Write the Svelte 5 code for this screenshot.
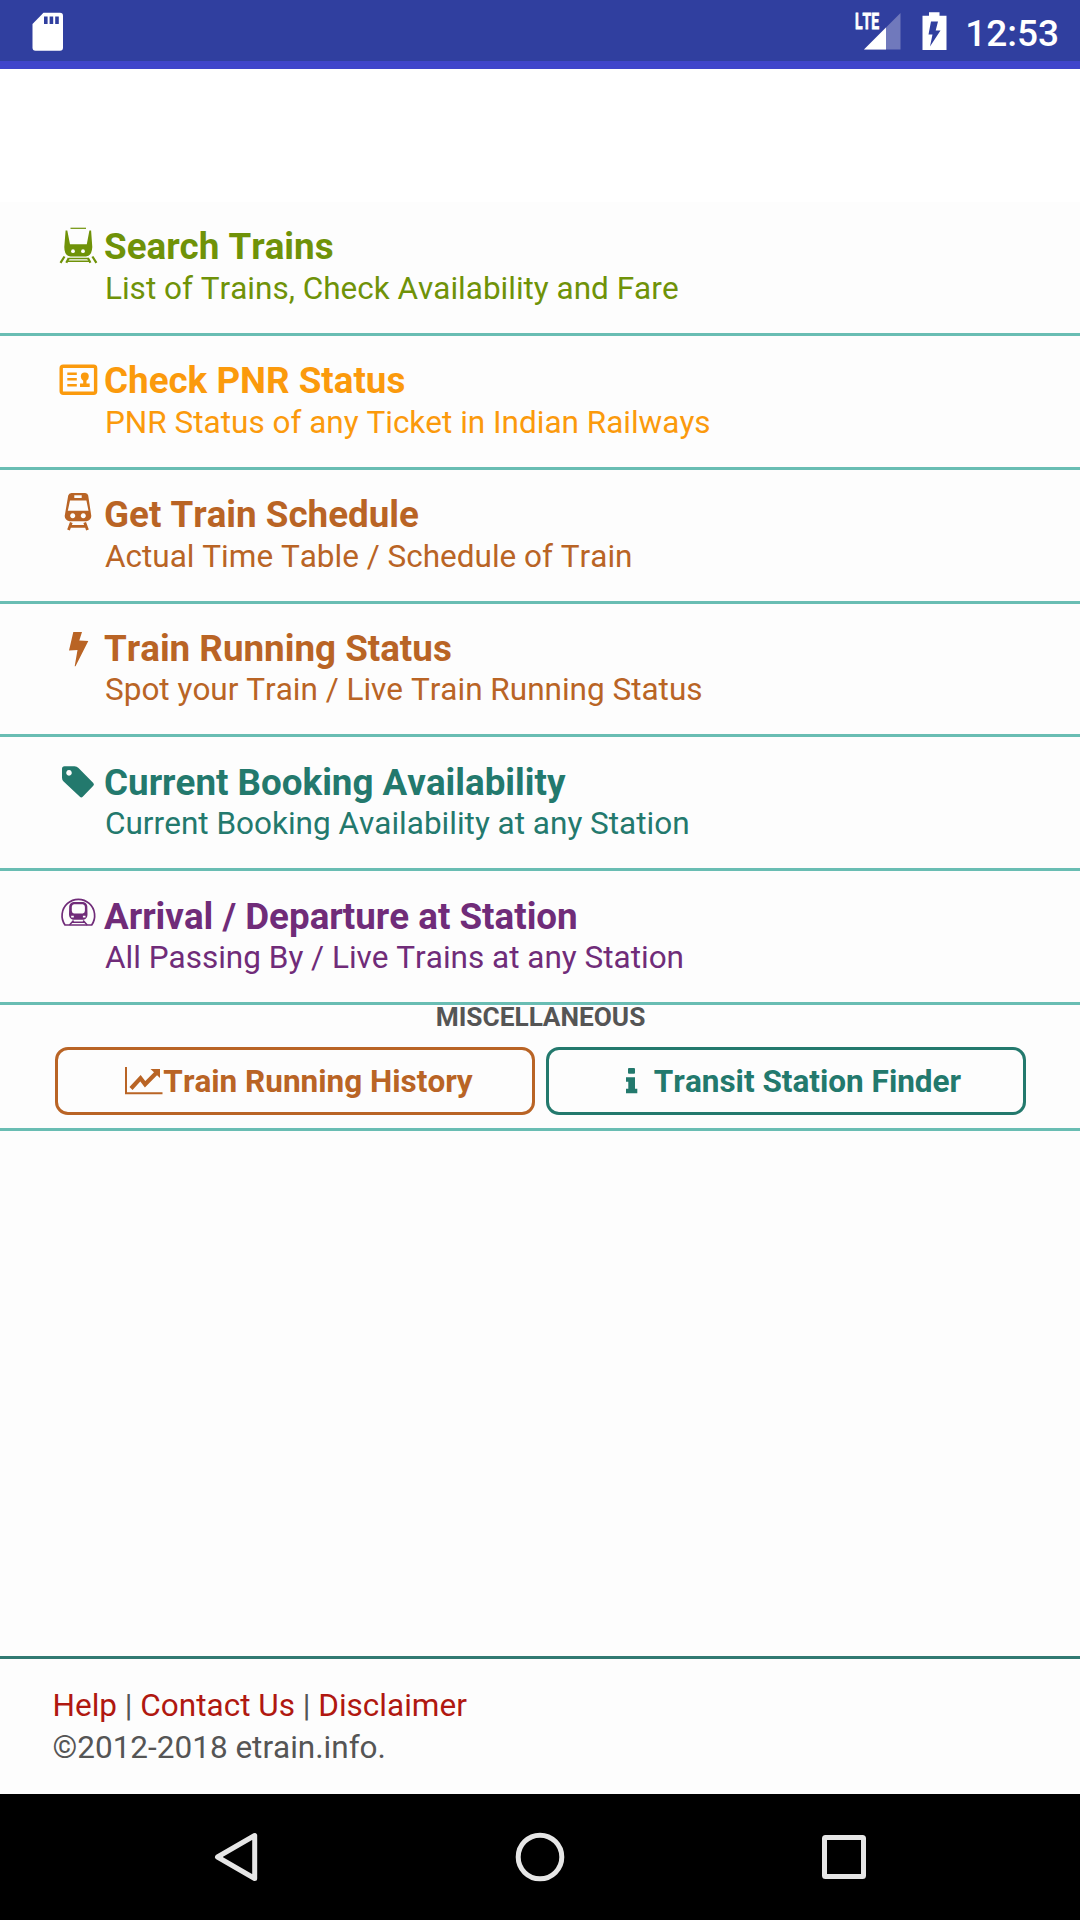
<script lang="ts">
	type Item = { title: string; text: string; color: string; icon: string };

	const items: Item[] = [
		{
			title: 'Search Trains',
			text: 'List of Trains, Check Availability and Fare',
			color: 'green',
			icon: 'train-front'
		},
		{
			title: 'Check PNR Status',
			text: 'PNR Status of any Ticket in Indian Railways',
			color: 'orange',
			icon: 'card'
		},
		{
			title: 'Get Train Schedule',
			text: 'Actual Time Table / Schedule of Train',
			color: 'brown',
			icon: 'train'
		},
		{
			title: 'Train Running Status',
			text: 'Spot your Train / Live Train Running Status',
			color: 'brown',
			icon: 'bolt'
		},
		{
			title: 'Current Booking Availability',
			text: 'Current Booking Availability at any Station',
			color: 'teal',
			icon: 'tag'
		},
		{
			title: 'Arrival / Departure at Station',
			text: 'All Passing By / Live Trains at any Station',
			color: 'purple',
			icon: 'tunnel'
		}
	];
</script>

<div class="screen">
	<header class="status-bar">
		<svg class="sd" width="32" height="40" viewBox="0 0 32 40">
			<path d="M11.500 0.700H28q3 0 3 3v32q0 3-3 3H3.500q-3 0-3-3V12z" fill="#fff" />
			<path d="M12 4.500h3.600v7.500H12zM17.600 4.500h3.600v7.500h-3.600zM23.200 4.500h3.600v7.500h-3.600z" fill="#303f9f" />
		</svg>
		<div class="status-right">
			<svg class="signal" width="50" height="50" viewBox="-4 -10 50 50">
				<path d="M45.500 1v36.500H9z" fill="#7079bc" />
				<path d="M31 15.500v22H9z" fill="#fff" />
				<text x="0" y="17.200" textLength="24" lengthAdjust="spacingAndGlyphs">LTE</text>
			</svg>
			<svg class="battery" width="25" height="40" viewBox="0 0 25 40">
				<path d="M7 0.300h10.500v3.500H24.500v34.200H0.500V3.800H7z" fill="#fff" />
				<path d="M9 9.500h7l-2.300 9H18.500L8 34.500l2.500-12H6.500z" fill="#303f9f" />
			</svg>
			<span class="clock">12:53</span>
		</div>
	</header>

	<main>
		<div class="banner"></div>

		{#each items as item}
			<div class="item {item.color}">
				<div class="title">
					<svg class="icon" width="40" height="40" viewBox="0 0 40 40" fill="currentColor">
						{#if item.icon === 'train-front'}
							<path d="M7.600 4.500 6.300 21q0 9 6.200 9.500h15.400q6-.5 6.400-9.500L33.100 4.500H31.400l-2.600 13.800H12L9.300 4.500z" />
							<path d="M12.500 2.300h15.500" fill="none" stroke="currentColor" stroke-width="1.200" />
							<path d="M6.500 30.500 2.500 36.800M10.800 32 8.300 36.800M34.400 30.500l4 6.300M29.900 32l2.500 4.800" fill="none" stroke="currentColor" stroke-width="2.200" />
							<path d="M11 32.500h19M9.500 35.300h22" fill="none" stroke="currentColor" stroke-width="1.500" />
							<circle cx="15" cy="25.200" r="1.900" fill="#fff" />
							<circle cx="25" cy="25.200" r="1.900" fill="#fff" />
						{:else if item.icon === 'card'}
							<rect x="3.200" y="6.300" width="34.400" height="27" rx="2" fill="none" stroke="currentColor" stroke-width="3.400" />
							<path d="M9.300 13.800h9.500M9.300 19.300h9.500M9.300 25.300h9.500" fill="none" stroke="currentColor" stroke-width="2.600" />
							<path d="M26.800 12.500a4 4 0 0 1 4 4q0 2.500-2.300 4.300v2.700h3.200v3.500H22v-3.500h3.200v-2.700q-2.400-1.800-2.400-4.300a4 4 0 0 1 4-4z" />
						{:else if item.icon === 'train'}
							<path fill-rule="evenodd" d="M13.500-1h13.700q2.500.3 3 2.500L33.300 22q0 4-4.800 5.300H11.500Q6.700 26 6.700 22L10.200 1.500q.7-2.200 3.300-2.500zM16.300 1.300v2.700h7.400V1.300zM12 6.500 9.800 16.800h20.700L28.400 6.500zM14.700 19.200a2.500 2.500 0 1 0 .01 0zM25.300 19.200a2.500 2.500 0 1 0 .01 0z" />
							<path d="M13.300 28.500 10.500 36M26.700 28.500l2.800 7.500M12.500 32.300h15.200" fill="none" stroke="currentColor" stroke-width="2.800" />
						{:else if item.icon === 'bolt'}
							<path d="M15.300 4.100H24l-2.700 8.500 9 .5-12.800 25.100h-.8l2.800-16.200-8.500.5z" />
						{:else if item.icon === 'tag'}
							<path fill-rule="evenodd" d="M6.500 4.200h10q2.300 0 4 1.700L35.300 21q1.300 1.400 0 2.800L24.700 34.800q-1.400 1.200-2.800 0L5.600 19.500Q4 18 4 15.800V6.700q0-2.500 2.500-2.500zM11 8.100a2.800 2.800 0 1 0 .01 0z" />
						{:else}
							<path d="M7 29a16.300 16.300 0 1 1 26.700 0z" fill="none" stroke="currentColor" stroke-width="1.700" />
							<path fill-rule="evenodd" d="M15.500 5.900h9.700q3.800.6 4.100 4.300l.2 8q0 4.300-3.700 5.600H15q-4-1.300-4-5.600l.2-8q.5-3.700 4.300-4.300zM16 8.300q-2 .4-2.200 2.500v4.200q.2 2 2.200 2.500h8.700q2-.5 2.200-2.500v-4.200q-.2-2.100-2.200-2.500z" />
							<path d="M15.500 24.500 11.500 29M25.200 24.500l4 4.500M14.500 26.200h11.700" fill="none" stroke="currentColor" stroke-width="1.500" />
							<path d="M13.200 19.800h2.600v1.600h-2.600zM24.900 19.800h2.600v1.600h-2.600z" fill="#fff" />
						{/if}
					</svg>
					<span>{item.title}</span>
				</div>
				<p>{item.text}</p>
			</div>
		{/each}

		<section class="misc">
			<h2>MISCELLANEOUS</h2>
			<div class="buttons">
				<button class="brown history">
					<svg class="chart" width="38" height="30" viewBox="0 0 38 30" fill="none" stroke="currentColor">
						<path d="M1 1v26.200h36.500" stroke-width="2" />
						<path d="m6 22.500 9.500-10.300 4.600 6L32 6.300" stroke-width="4.200" />
						<path d="M25.500 3h9.500v9z" fill="currentColor" stroke="none" />
					</svg>
					<span>Train Running History</span>
				</button>
				<button class="teal finder">
					<svg class="info" width="13" height="28" viewBox="0 0 13 28" fill="currentColor">
						<rect x="3" y="1" width="7" height="5.800" rx="1" />
						<path d="M1 10.300h9v11.500h2.300v4.500H1v-4.500h2.300v-7H1z" />
					</svg>
					<span>Transit Station Finder</span>
				</button>
			</div>
		</section>
	</main>

	<footer>
		<div><a href="#help">Help</a> | <a href="#contact">Contact Us</a> | <a href="#disclaimer">Disclaimer</a></div>
		<div>©2012-2018 etrain.info.</div>
	</footer>

	<nav>
		<svg width="50" height="56" viewBox="0 0 50 56">
			<path d="M43.700 6.500v43L6.500 28z" />
		</svg>
		<svg width="50" height="56" viewBox="0 0 50 56">
			<circle cx="25" cy="28" r="21.800" />
		</svg>
		<svg width="50" height="56" viewBox="0 0 50 56">
			<rect x="5.500" y="8.500" width="39" height="39" rx="1" />
		</svg>
	</nav>
</div>

<style>
	:global(body) {
		background: #fdfdfd;
	}
	.screen {
		display: flex;
		flex-direction: column;
		width: 1080px;
		height: 1920px;
		overflow: hidden;
		background: #fdfdfd;
		color: #555;
		font-family: Roboto, sans-serif;
		font-size: 31.5px;
		font-kerning: none;
	}
	.status-bar {
		display: flex;
		justify-content: space-between;
		box-sizing: border-box;
		height: 69px;
		padding: 12px 21px 0 32px;
		border-bottom: 8px solid #3f45cb;
		background: #303f9f;
	}
	.status-right {
		display: flex;
	}
	.signal {
		margin-top: -10px;
		overflow: visible;
	}
	.status-right text {
		font-size: 22.5px;
		font-weight: 700;
		fill: #fff;
		stroke: #fff;
		stroke-width: 0.8;
	}
	.battery {
		margin: 0 18.5px 0 20.5px;
	}
	.clock {
		color: #fff;
		font-size: 37px;
		font-weight: 500;
		line-height: 43px;
	}

	main {
		flex: 1;
	}
	.banner {
		height: 132.95px;
		background: #fff;
	}
	.item {
		box-sizing: border-box;
		height: 133.87px;
		padding: 24.5px 0 0 58px;
		border-bottom: 3px solid #69bdb3;
	}
	.title {
		display: flex;
		gap: 6px;
		height: 41.4px;
		font-size: 36.75px;
		font-weight: 700;
		line-height: 42px;
	}
	.icon {
		overflow: visible;
	}
	.item p {
		margin: 0;
		padding-left: 47px;
		line-height: 42px;
	}
	.green {
		color: #6f9208;
	}
	.orange {
		color: #fb9a0c;
	}
	.brown {
		color: #b96425;
	}
	.teal {
		color: #23796d;
	}
	.purple {
		color: #702c79;
	}

	.misc {
		box-sizing: border-box;
		height: 125.8px;
		padding: 0 54px 0 55px;
		border-bottom: 3px solid #69bdb3;
	}
	h2 {
		margin: 0;
		font-size: 26.25px;
		line-height: 24px;
		text-align: center;
	}
	.buttons {
		display: flex;
		justify-content: space-between;
		margin-top: 18px;
	}
	button {
		display: flex;
		align-items: center;
		justify-content: center;
		box-sizing: border-box;
		width: 480px;
		height: 68px;
		padding: 0;
		border: 3px solid currentColor;
		border-radius: 13px;
		background: transparent;
		font: 700 31.5px Roboto, sans-serif;
		font-kerning: none;
	}
	button span {
		padding-top: 1px;
	}
	.history {
		padding-left: 8px;
	}
	.finder {
		padding-left: 14px;
	}
	.info {
		margin-right: 16px;
	}

	footer {
		box-sizing: border-box;
		height: 138px;
		padding: 26px 52px 0 52.5px;
		border-top: 3px solid #327a72;
		line-height: 42px;
	}
	footer a {
		color: #b01810;
		text-decoration: none;
	}

	nav {
		display: flex;
		justify-content: space-between;
		align-items: center;
		box-sizing: border-box;
		height: 126px;
		padding: 0 211px;
		background: #000;
	}
	nav svg {
		fill: none;
		stroke: #e6e6e6;
		stroke-width: 5;
		stroke-linejoin: round;
	}
</style>
